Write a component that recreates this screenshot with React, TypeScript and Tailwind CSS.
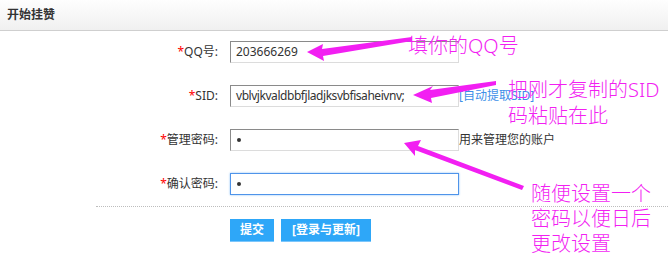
import React from "react";

const font = "font-['Noto_Sans','Noto_Sans_CJK_SC',sans-serif]";

function Label({ text }: { text: string }) {
  return (
    <div className="w-[219px] pr-[1px] text-right text-[12px] leading-[22px] text-[#333]">
      <span className="text-[#f00]">*</span>
      {text}
    </div>
  );
}

function Box({
  children,
  focused,
}: {
  children?: React.ReactNode;
  focused?: boolean;
}) {
  return (
    <div
      className={
        "ml-[11px] flex h-[22px] w-[229px] items-center bg-white pl-[5px] text-[12px] text-[#333] " +
        (focused
          ? "border border-[#4f94ea] shadow-[0_0_2px_#8cc0f5]"
          : "border border-t-[#8a8a8a] border-l-[#8a8a8a] border-b-[#dcdcdc] border-r-[#dcdcdc]")
      }
    >
      {children}
    </div>
  );
}

function Dot() {
  return <span className="ml-[1px] inline-block h-[4px] w-[4px] rounded-full bg-[#333]" />;
}

export default function App() {
  return (
    <div className={`relative h-[257px] w-[668px] overflow-hidden bg-white ${font}`}>
      <div className="h-[31px] border-b border-[#cfcfcf] bg-gradient-to-b from-[#fefefe] to-[#f0f0f0] pl-[7px] text-[12px] font-bold leading-[30px] text-[#333]">
        开始挂赞
      </div>

      <div className="flex flex-col gap-[22px] pt-[10px]">
        <div className="flex h-[22px] items-center">
          <Label text="QQ号:" />
          <Box>203666269</Box>
        </div>
        <div className="flex h-[22px] items-center">
          <Label text="SID:" />
          <Box>
            <span className="tracking-[-0.45px]">vblvjkvaldbbfjladjksvbfisaheivnv;</span>
          </Box>
          <span className="text-[12px] text-[#3d8fe8]">[自动提取SID]</span>
        </div>
        <div className="flex h-[22px] items-center">
          <Label text="管理密码:" />
          <Box>
            <Dot />
          </Box>
          <span className="text-[12px] text-[#333]">用来管理您的账户</span>
        </div>
        <div className="flex h-[22px] items-center">
          <Label text="确认密码:" />
          <Box focused>
            <Dot />
          </Box>
        </div>
      </div>

      <div className="ml-[96px] mt-[11px] border-t border-dotted border-[#bdbdbd]" />

      <div className="mt-[12px] flex gap-[7px] pl-[230px]">
        <div className="flex h-[23px] w-[44px] items-center justify-center border-b border-[#7cc6fb] bg-[#2ea7f8] text-[12px] font-bold text-white">
          提交
        </div>
        <div className="flex h-[23px] w-[90px] items-center justify-center border-b border-[#7cc6fb] bg-[#2ea7f8] text-[12px] font-bold text-white">
          [登录与更新]
        </div>
      </div>

      <svg
        className="pointer-events-none absolute left-0 top-0"
        width="668"
        height="257"
        viewBox="0 0 668 257"
      >
        <polygon
          fill="#f21ff2"
          points="307,52 323,44 322,49 412,37 412,41 323,56 324,61"
        />
        <polygon
          fill="#f21ff2"
          points="413,95 433,86 430,90 496,81 496,85 431,98 432,103"
        />
        <polygon
          fill="#f21ff2"
          points="404,143 421,140 418,146 524,186 522,190 415,150 415,156"
        />
      </svg>

      <div className="pointer-events-none absolute left-[408px] top-[33px] text-[20px] font-light leading-[26px] text-[#f21ff2]">
        填你的QQ号
      </div>
      <div className="pointer-events-none absolute left-[508px] top-[77px] text-[20px] font-light leading-[26px] text-[#f21ff2]">
        把刚才复制的SID
        <br />
        码粘贴在此
      </div>
      <div className="pointer-events-none absolute left-[531px] top-[181px] text-[20px] font-light leading-[25px] text-[#f21ff2]">
        随便设置一个
        <br />
        密码以便日后
        <br />
        更改设置
      </div>
    </div>
  );
}
